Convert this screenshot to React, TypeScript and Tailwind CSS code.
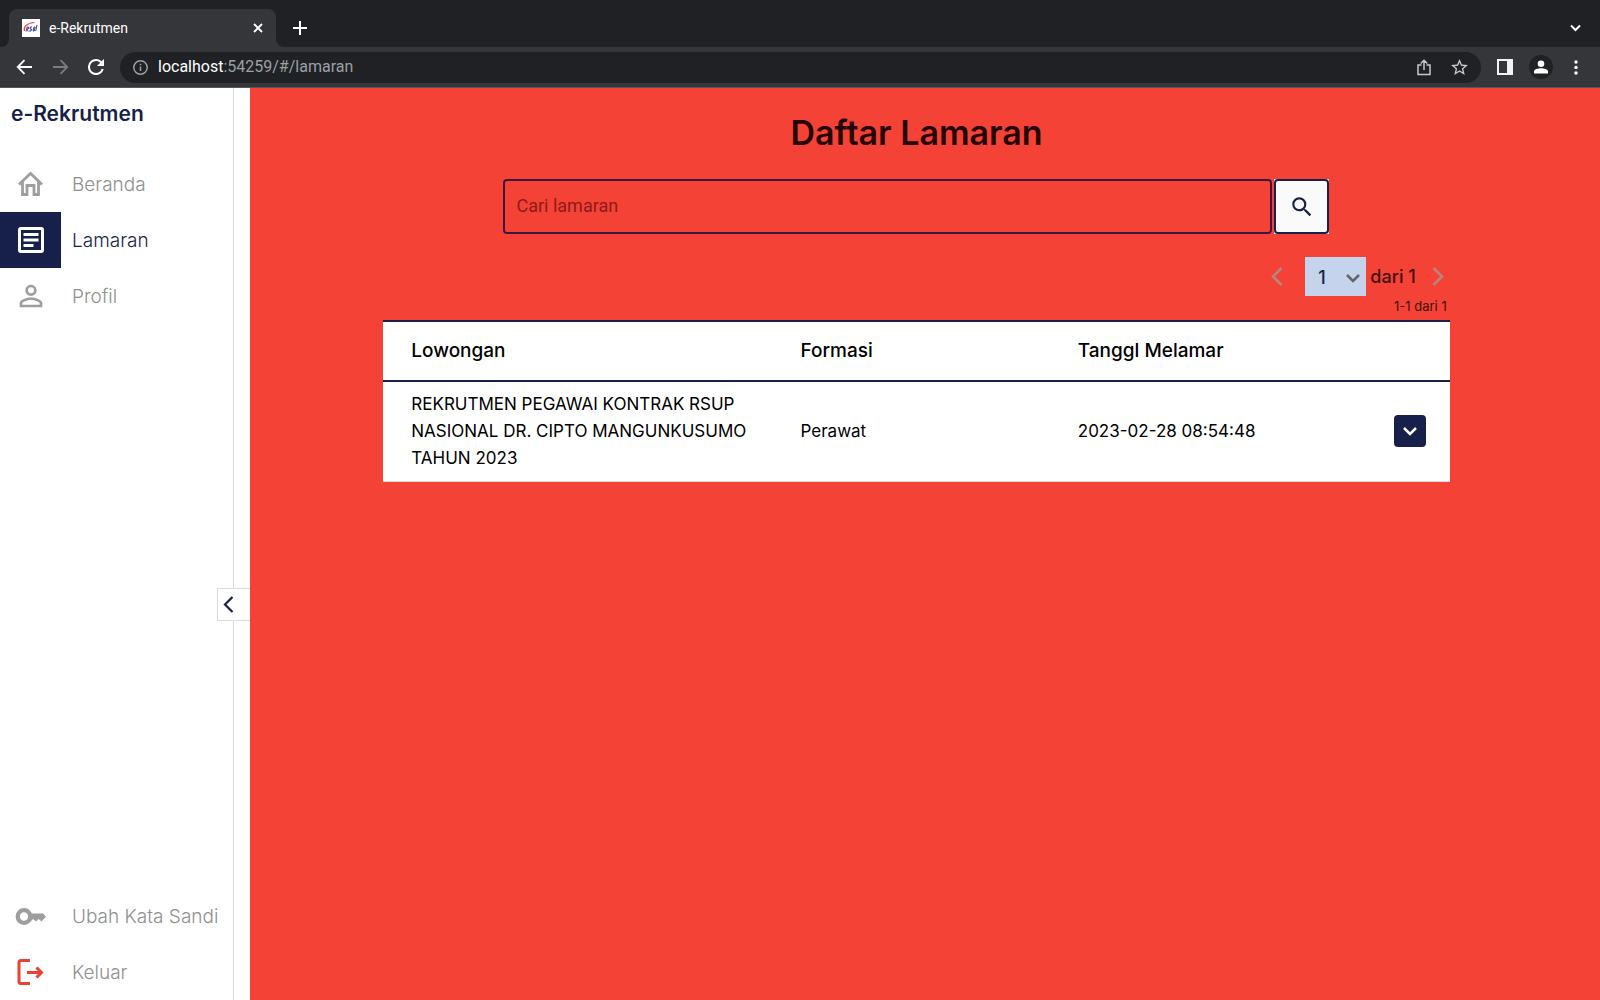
import React from "react";

function NavItem({ label, icon, active = false }: { label: string; icon: React.ReactNode; active?: boolean }) {
  return (
    <a href="#" aria-current={active ? "page" : undefined} className="flex h-14 items-center whitespace-nowrap">
      <span className={active ? "flex h-14 w-[61px] items-center justify-center bg-[#171f4b] text-white" : "flex h-14 w-[61px] items-center justify-center text-[#9e9e9e]"}>
        {icon}
      </span>
      <span className={active ? "pt-0.5 pl-[11px] text-[19px] font-light text-[#171f4b]" : "pt-0.5 pl-[11px] text-[19px] font-light text-[#8f8f8f]"}>{label}</span>
    </a>
  );
}

const HomeIcon = () => (
  <svg width="34" height="34" viewBox="0 0 34 34" fill="none" stroke="currentColor" strokeWidth="2.800">
    <path d="M5 17.500L16.500 6.500l11.500 11M8.500 14.500V27.500h4.500V18.500h7v9h4.500V14.500" />
  </svg>
);
const ArticleIcon = () => (
  <svg width="34" height="34" viewBox="0 0 34 34" fill="none" stroke="currentColor" strokeWidth="3">
    <rect x="5.500" y="5.500" width="23" height="23" rx="1.500" />
    <path d="M9.500 11.500h15M9.500 17h15M9.500 22.500h10" />
  </svg>
);
const PersonIcon = () => (
  <svg width="34" height="34" viewBox="0 0 24 24" fill="currentColor">
    <path d="M12 5.900a2.100 2.100 0 1 1 0 4.200 2.100 2.100 0 0 1 0-4.200m0 9c2.970 0 6.100 1.460 6.100 2.100v1.100H5.900V17c0-.64 3.130-2.100 6.100-2.100M12 4C9.790 4 8 5.790 8 8s1.790 4 4 4 4-1.790 4-4-1.790-4-4-4zm0 9c-2.670 0-8 1.340-8 4v3h16v-3c0-2.660-5.330-4-8-4z" />
  </svg>
);
const KeyIcon = () => (
  <svg width="34" height="34" viewBox="0 0 34 34">
    <circle cx="10" cy="17.500" r="6.300" fill="none" stroke="currentColor" strokeWidth="4.200" />
    <path fill="currentColor" d="M16 14.500h13l3 3.200-4.500 4.800-3-2.500-2.500 2.500-3-2.500-1.500 1.500H16z" />
  </svg>
);
const LogoutIcon = () => (
  <svg width="34" height="34" viewBox="0 0 34 34" fill="none" stroke="#ea4335" strokeWidth="3">
    <path d="M16 5.500H7q-2 0-2 2v19q0 2 2 2H16M13 17.500h14.500M22.500 12.500l5 5-5 5" />
  </svg>
);

function BrowserBar() {
  return (
    <header className="shrink-0 bg-[#202124] font-['Roboto',sans-serif] text-white">
      <div className="flex h-[47px] items-end px-[9px]">
        <div className="relative flex h-[38px] w-[267px] items-center rounded-t-lg bg-[#35363a] pr-[13px] pl-[13px]">
          <svg className="absolute bottom-0 -left-2" width="8" height="8" viewBox="0 0 8 8"><path d="M8 0v8H0a8 8 0 0 0 8-8z" fill="#35363a" /></svg>
          <svg className="absolute -right-2 bottom-0" width="8" height="8" viewBox="0 0 8 8"><path d="M0 0v8h8a8 8 0 0 1-8-8z" fill="#35363a" /></svg>
          <svg width="18" height="18" viewBox="0 0 18 18" fill="none">
            <path fill="#fff" d="M0 0h18v18H0z" />
            <path d="M2.500 12C1 8 5 4 12.500 3.500" stroke="#e8453c" strokeWidth="1.200" />
            <path d="M4 12.500L5.200 8h1.600l-.6 2H5l1.200 2.500M10 8H8.500L8 10h1.500L9 12H7.200M11 12l1-4h1.200l-1 4zM15 6l-1.300 6" stroke="#3a3f9c" strokeWidth="1" />
          </svg>
          <span className="ml-[9px] flex-1 text-[14px]">e-Rekrutmen</span>
          <button aria-label="Tutup tab"><svg width="10" height="10" viewBox="0 0 10 10" stroke="#fff" strokeWidth="1.800"><path d="M1 1l8 8M9 1L1 9" /></svg></button>
        </div>
        <button aria-label="Tab baru" className="mb-3 ml-[17px]"><svg width="14" height="14" viewBox="0 0 14 14" stroke="#fff" strokeWidth="2"><path d="M7 0v14M0 7h14" /></svg></button>
        <button aria-label="Cari tab" className="mr-[10px] mb-[14px] ml-auto"><svg width="11" height="11" viewBox="0 0 11 11" fill="none" stroke="#fff" strokeWidth="2"><path d="M1 3.500l4.500 4.500L10 3.500" /></svg></button>
      </div>
      <div className="flex h-[41px] items-center border-b border-[#55565a] bg-[#35363a] pr-[22px] pl-4">
        <button aria-label="Kembali"><svg width="17" height="16" viewBox="0 0 17 16" fill="none" stroke="#fff" strokeWidth="1.800"><path d="M16 8H2M8.500 1.200L1.700 8l6.800 6.800" /></svg></button>
        <button aria-label="Maju" className="ml-[19px]"><svg width="17" height="16" viewBox="0 0 17 16" fill="none" stroke="#7b7c7f" strokeWidth="1.800"><path d="M1 8h14M8.500 1.200L15.300 8l-6.800 6.800" /></svg></button>
        <button aria-label="Muat ulang" className="ml-[19px]"><svg width="16" height="16" viewBox="4 4 16 16" fill="#fff"><path d="M17.650 6.350A7.958 7.958 0 0 0 12 4a8 8 0 1 0 7.730 10h-2.080A6 6 0 1 1 12 6c1.660 0 3.140.69 4.220 1.780L13 11h7V4l-2.350 2.350z" /></svg></button>
        <div className="ml-4 flex h-[31px] flex-1 items-center rounded-full bg-[#202124] px-[13px]">
          <svg width="15" height="15" viewBox="0 0 15 15" fill="none" stroke="#9aa0a6" strokeWidth="1.500"><circle cx="7.500" cy="7.500" r="6.700" /><path d="M7.500 6.500v4.500M7.500 3.800v1.500" /></svg>
          <p className="ml-[10px] flex-1 text-base text-[#9aa0a6]"><span className="text-white">localhost</span>:54259/#/lamaran</p>
          <button aria-label="Bagikan"><svg width="14" height="17" viewBox="0 0 14 17" fill="none" stroke="#c8c9cc" strokeWidth="1.500"><path d="M4.500 6H1v9.500h12V6H9.500M7 11V1.500M3.700 4.500L7 1.300l3.300 3.200" /></svg></button>
          <button aria-label="Tandai" className="ml-5"><svg width="17" height="16" viewBox="2 2 20 19" fill="#c8c9cc"><path d="M22 9.240l-7.190-.62L12 2 9.190 8.630 2 9.240l5.460 4.730L5.820 21 12 17.270 18.180 21l-1.630-7.030L22 9.240zM12 15.400l-3.760 2.270 1-4.280-3.320-2.880 4.380-.38L12 6.100l1.710 4.040 4.380.38-3.320 2.880 1 4.280L12 15.400z" /></svg></button>
        </div>
        <button aria-label="Panel samping" className="ml-4"><svg width="16" height="16" viewBox="0 0 16 16"><path fill="#f1f3f4" fillRule="evenodd" d="M0 0h16v16H0zM2 2v12h8V2z" /></svg></button>
        <button aria-label="Profil pengguna" className="ml-4 flex h-6 w-6 items-center justify-center rounded-full bg-[#202124]"><svg width="14" height="14" viewBox="0 0 14 14" fill="#fff"><circle cx="7" cy="3.800" r="3.300" /><path d="M0 13.500v-2C0 9 4 8.200 7 8.200s7 .8 7 3.300v2z" /></svg></button>
        <button aria-label="Menu" className="ml-[21px]"><svg width="4" height="15" viewBox="0 0 4 15" fill="#fff"><circle cx="2" cy="2" r="1.700" /><circle cx="2" cy="7.500" r="1.700" /><circle cx="2" cy="13" r="1.700" /></svg></button>
      </div>
    </header>
  );
}

export default function App() {
  return (
    <div className="flex min-h-screen flex-col bg-white">
      <BrowserBar />
      <div className="flex flex-1 font-['Inter',sans-serif]">
        <aside className="relative flex w-[250px] shrink-0 flex-col pr-4">
          <div className="flex flex-1 flex-col border-r border-[#d9dade]">
            <h1 className="h-[68px] pt-3 pl-[11px] text-[21px] leading-7 font-semibold text-[#171f4b]">e-Rekrutmen</h1>
            <nav aria-label="Utama" className="flex flex-1 flex-col">
              <NavItem label="Beranda" icon={<HomeIcon />} />
              <NavItem label="Lamaran" icon={<ArticleIcon />} active />
              <NavItem label="Profil" icon={<PersonIcon />} />
              <div className="mt-auto">
                <NavItem label="Ubah Kata Sandi" icon={<KeyIcon />} />
                <NavItem label="Keluar" icon={<LogoutIcon />} />
              </div>
            </nav>
          </div>
          <button aria-label="Ciutkan menu" className="absolute top-[500px] right-0 flex h-[33px] w-[33px] items-center border border-r-0 border-[#d9dade] bg-white pl-[5px]">
            <svg width="11" height="18" viewBox="0 0 11 18" fill="none" stroke="#171f4b" strokeWidth="2.200"><path d="M9.500 1L2 8.500l7.500 7.500" /></svg>
          </button>
        </aside>
        <main className="min-w-0 flex-1 bg-[#f44336] pr-[17px]">
          <div className="mx-auto w-4/5">
            <h2 className="pt-[25px] text-center text-[34px] leading-10 font-semibold text-[#250505]">Daftar Lamaran</h2>
            <form className="mx-auto mt-[26px] flex max-w-[826px] gap-0.5" onSubmit={(e) => e.preventDefault()}>
              <input aria-label="Cari lamaran" placeholder="Cari lamaran" className="h-[55px] min-w-0 flex-1 rounded border-2 border-[#3b1740] px-[11px] pb-0.5 font-['Roboto',sans-serif] text-[18px] text-[#250505] placeholder:text-[#8c1c17] placeholder:opacity-100" />
              <span className="bg-[#fafafa]">
                <button aria-label="Cari" className="flex h-[55px] w-[55px] items-center justify-center rounded border-2 border-[#171f4b] bg-[#fafafa]">
                  <svg width="26" height="26" viewBox="0 0 24 24" fill="#171f4b"><path d="M15.500 14h-.79l-.28-.27A6.471 6.471 0 0 0 16 9.500 6.500 6.500 0 1 0 9.500 16c1.610 0 3.090-.59 4.230-1.570l.27.28v.79l5 4.990L20.490 19l-4.990-5zm-6 0C7.010 14 5 11.990 5 9.500S7.010 5 9.500 5 14 7.010 14 9.500 11.990 14 9.500 14z" /></svg>
                </button>
              </span>
            </form>
            <div className="mt-[23px] flex items-center justify-end pr-[6px] text-[18px] font-medium text-[#3f100d]">
              <button aria-label="Halaman sebelumnya" className="mr-[22px]"><svg width="12" height="20" viewBox="0 0 12 20" fill="none" stroke="#b98480" strokeWidth="2.500"><path d="M10.500 1L2 9.500l8.500 8.500" /></svg></button>
              <div className="relative mr-1">
                <select aria-label="Halaman" className="h-[39px] w-[61px] appearance-none bg-[#c5d3ec] pt-0.5 pl-[13px] font-medium text-[#171f4b]"><option>1</option></select>
                <svg className="pointer-events-none absolute top-[17px] right-[6px]" width="14" height="9" viewBox="0 0 14 9" fill="none" stroke="#616469" strokeWidth="2.500"><path d="M1 1l6 6 6-6" /></svg>
              </div>
              <span>dari 1</span>
              <button aria-label="Halaman berikutnya" className="ml-4"><svg width="12" height="20" viewBox="0 0 12 20" fill="none" stroke="#b98480" strokeWidth="2.500"><path d="M1.500 1L10 9.500l-8.500 8.500" /></svg></button>
            </div>
            <p className="pt-px pr-[3px] text-right text-[13px] leading-[18px] text-[#3f100d]">1-1 dari 1</p>
            <table className="mt-[5px] w-full table-fixed border-b border-[#d5dde6] bg-white text-left text-black">
              <colgroup><col className="w-[36.5%]" /><col className="w-[26%]" /><col /><col className="w-[84px]" /></colgroup>
              <thead>
                <tr className="h-[60px] border-y-2 border-[#171f4b] text-[19px]">
                  <th className="pl-7 font-medium">Lowongan</th>
                  <th className="pl-7 font-medium">Formasi</th>
                  <th className="pl-7 font-medium">Tanggl Melamar</th>
                  <th aria-label="Aksi" />
                </tr>
              </thead>
              <tbody>
                <tr className="h-[100px] text-[17px] leading-[27px]">
                  <td className="pl-7">REKRUTMEN PEGAWAI KONTRAK RSUP<br />NASIONAL DR. CIPTO MANGUNKUSUMO<br />TAHUN 2023</td>
                  <td className="pl-7">Perawat</td>
                  <td className="pl-7">2023-02-28 08:54:48</td>
                  <td className="pl-7">
                    <button aria-label="Buka rincian" className="flex h-8 w-8 items-center justify-center rounded-sm bg-[#171f4b]"><svg width="14" height="9" viewBox="0 0 14 9" fill="none" stroke="#fff" strokeWidth="2.500"><path d="M1 1l6 6 6-6" /></svg></button>
                  </td>
                </tr>
              </tbody>
            </table>
          </div>
        </main>
      </div>
    </div>
  );
}
